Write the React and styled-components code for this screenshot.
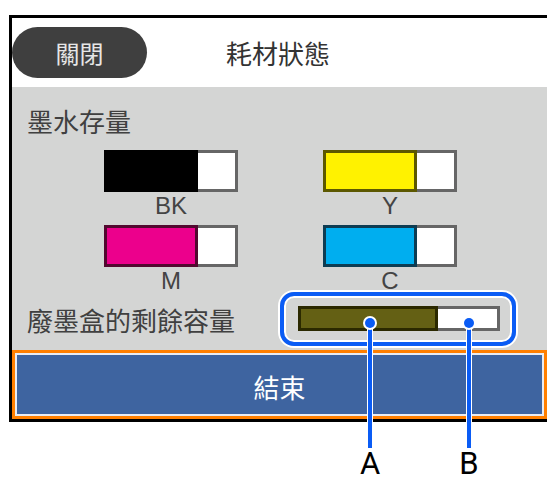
import React from 'react';
import styled, { createGlobalStyle } from 'styled-components';

const GlobalStyle = createGlobalStyle`
  html, body {
    margin: 0;
    background: #ffffff;
    overflow: hidden;
    font-family: "Noto Sans CJK TC", "Noto Sans", sans-serif;
  }
`;

const Page = styled.div`
  position: relative;
  width: 547px;
  height: 477px;
  padding: 15px 0 0 9px;
  box-sizing: border-box;
`;

const Screen = styled.div`
  width: 535px;
  border: 3px solid #000;
  display: flex;
  flex-direction: column;
`;

const Header = styled.div`
  height: 69px;
  background: #ffffff;
  display: flex;
  align-items: center;
`;

const CloseButton = styled.div`
  width: 135px;
  height: 51px;
  border-radius: 26px;
  background: #3f3f3f;
  color: #e6e6e6;
  font-size: 24px;
  display: flex;
  align-items: center;
  justify-content: center;
`;

const Title = styled.div`
  margin-left: 79px;
  font-size: 26px;
  color: #333;
`;

const Body = styled.div`
  height: 263px;
  background: #d4d5d4;
  padding: 19px 0 0 15px;
  box-sizing: border-box;
  display: flex;
  flex-direction: column;
`;

const Heading = styled.div`
  font-size: 26px;
  line-height: 30px;
  color: #404040;
`;

const InkGrid = styled.div`
  margin: 14px 0 0 77px;
  display: grid;
  grid-template-columns: 134px 134px;
  column-gap: 85px;
  row-gap: 7px;
`;

const InkItem = styled.div`
  display: flex;
  flex-direction: column;
  align-items: center;
`;

const Bar = styled.div`
  width: ${(p) => p.$width}px;
  height: ${(p) => p.$height}px;
  display: flex;
`;

const Fill = styled.div`
  box-sizing: border-box;
  background: ${(p) => p.$color};
  border: 3px solid ${(p) => p.$edge};
`;

const Empty = styled.div`
  flex: 1;
  background: #ffffff;
  border: 3px solid #666;
  border-left: 0;
`;

const InkLabel = styled.div`
  height: 26px;
  line-height: 28px;
  font-family: "Liberation Sans", Arial, sans-serif;
  font-size: 24px;
  color: #444;
`;

const WasteRow = styled.div`
  margin-top: -1px;
  display: flex;
  align-items: center;
`;

const WasteLabel = styled.div`
  flex: 0 0 253px;
  font-size: 26px;
  color: #404040;
`;

const Highlight = styled.div`
  border: 4px solid #0a5cf5;
  border-radius: 14px;
  box-shadow: 0 0 0 2px #ffffff, inset 0 0 0 2px #ffffff;
  padding: 10px 12px 11px 14px;
`;

const Footer = styled.div`
  height: 69px;
  background: #ff7f00;
  padding: 3px;
  box-sizing: border-box;
  display: flex;
`;

const EndButton = styled.div`
  flex: 1;
  background: #3e64a0;
  border: 2px solid #e8ecf4;
  color: #ffffff;
  font-size: 26px;
  display: flex;
  align-items: center;
  justify-content: center;
  padding-top: 4px;
`;

const Leader = styled.div`
  position: absolute;
  left: ${(p) => p.$x - 2}px;
  top: 323px;
  width: 4px;
  height: 125px;
  background: #0a5cf5;
  box-shadow: 0 0 0 1px #ffffff;
`;

const Dot = styled.div`
  position: absolute;
  left: ${(p) => p.$x - 5}px;
  top: 318px;
  width: 10px;
  height: 10px;
  border-radius: 50%;
  background: #0a5cf5;
  box-shadow: 0 0 0 2px #ffffff;
`;

const Letter = styled.div`
  position: absolute;
  left: ${(p) => p.$x - 20}px;
  top: 450px;
  width: 40px;
  text-align: center;
  font-family: Roboto, "Noto Sans", sans-serif;
  font-size: 31px;
  line-height: 27px;
  color: #000;
`;

const inks = [
  { label: 'BK', color: '#000000', edge: '#000000' },
  { label: 'Y', color: '#fff200', edge: '#5c5800' },
  { label: 'M', color: '#ec008c', edge: '#52082f' },
  { label: 'C', color: '#00aeef', edge: '#0d3c52' },
];

const App = () => (
  <Page>
    <GlobalStyle />
    <Screen>
      <Header>
        <CloseButton>關閉</CloseButton>
        <Title>耗材狀態</Title>
      </Header>
      <Body>
        <Heading>墨水存量</Heading>
        <InkGrid>
          {inks.map((ink) => (
            <InkItem key={ink.label}>
              <Bar $width={134} $height={42}>
                <Fill $color={ink.color} $edge={ink.edge} style={{ width: 94 }} />
                <Empty />
              </Bar>
              <InkLabel>{ink.label}</InkLabel>
            </InkItem>
          ))}
        </InkGrid>
        <WasteRow>
          <WasteLabel>廢墨盒的剩餘容量</WasteLabel>
          <Highlight>
            <Bar $width={202} $height={25}>
              <Fill $color="#646014" $edge="#2b2900" style={{ width: 140 }} />
              <Empty />
            </Bar>
          </Highlight>
        </WasteRow>
      </Body>
      <Footer>
        <EndButton>結束</EndButton>
      </Footer>
    </Screen>
    <Leader $x={370} />
    <Dot $x={370} />
    <Letter $x={370}>A</Letter>
    <Leader $x={469} />
    <Dot $x={469} />
    <Letter $x={469}>B</Letter>
  </Page>
);

export default App;
